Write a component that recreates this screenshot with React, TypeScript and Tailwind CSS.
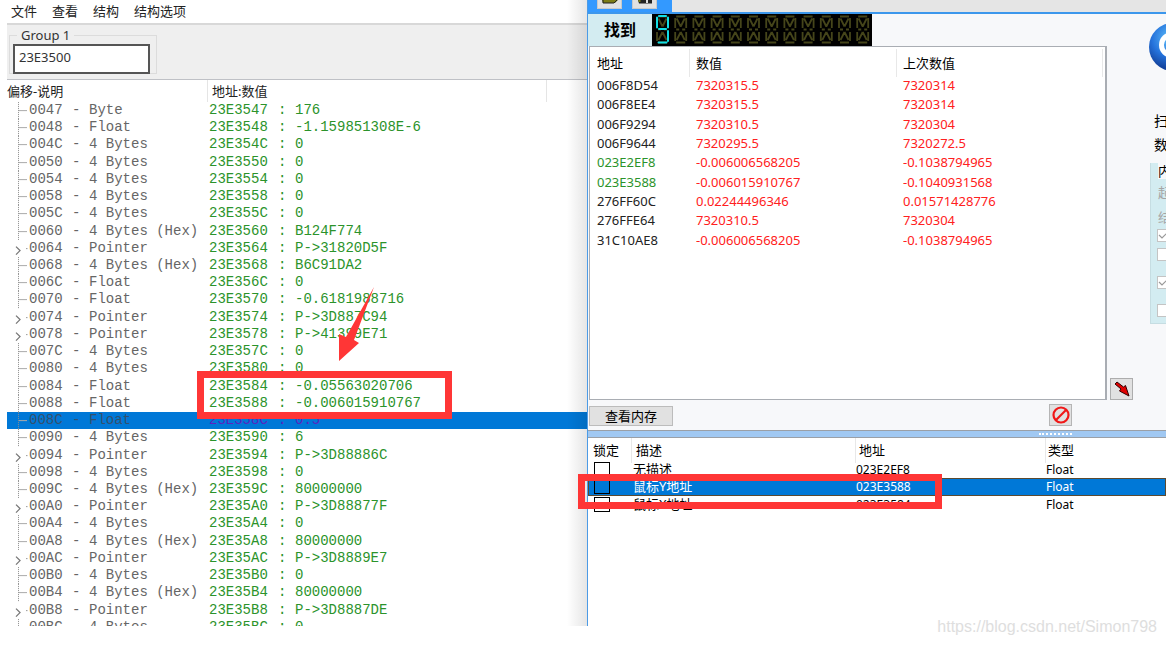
import clsx from "clsx"

interface TreeRow {
  offset: string
  type: string
  value: string
  selected?: boolean
}

interface FoundRow {
  address: string
  value: string
  previous: string
  isStatic?: boolean
}

interface CheatRow {
  description: string
  address: string
  type: string
  selected?: boolean
}

const menuItems = ["文件", "查看", "结构", "结构选项"]

const treeRows: TreeRow[] = [
  { offset: "47", type: "Byte", value: "176" },
  { offset: "48", type: "Float", value: "-1.159851308E-6" },
  { offset: "4C", type: "4 Bytes", value: "0" },
  { offset: "50", type: "4 Bytes", value: "0" },
  { offset: "54", type: "4 Bytes", value: "0" },
  { offset: "58", type: "4 Bytes", value: "0" },
  { offset: "5C", type: "4 Bytes", value: "0" },
  { offset: "60", type: "4 Bytes (Hex)", value: "B124F774" },
  { offset: "64", type: "Pointer", value: "P->31820D5F" },
  { offset: "68", type: "4 Bytes (Hex)", value: "B6C91DA2" },
  { offset: "6C", type: "Float", value: "0" },
  { offset: "70", type: "Float", value: "-0.6181988716" },
  { offset: "74", type: "Pointer", value: "P->3D887C94" },
  { offset: "78", type: "Pointer", value: "P->41399E71" },
  { offset: "7C", type: "4 Bytes", value: "0" },
  { offset: "80", type: "4 Bytes", value: "0" },
  { offset: "84", type: "Float", value: "-0.05563020706" },
  { offset: "88", type: "Float", value: "-0.006015910767" },
  { offset: "8C", type: "Float", value: "0.5", selected: true },
  { offset: "90", type: "4 Bytes", value: "6" },
  { offset: "94", type: "Pointer", value: "P->3D88886C" },
  { offset: "98", type: "4 Bytes", value: "0" },
  { offset: "9C", type: "4 Bytes (Hex)", value: "80000000" },
  { offset: "A0", type: "Pointer", value: "P->3D88877F" },
  { offset: "A4", type: "4 Bytes", value: "0" },
  { offset: "A8", type: "4 Bytes (Hex)", value: "80000000" },
  { offset: "AC", type: "Pointer", value: "P->3D8889E7" },
  { offset: "B0", type: "4 Bytes", value: "0" },
  { offset: "B4", type: "4 Bytes (Hex)", value: "80000000" },
  { offset: "B8", type: "Pointer", value: "P->3D8887DE" },
  { offset: "BC", type: "4 Bytes", value: "0" },
]

const foundRows: FoundRow[] = [
  { address: "006F8D54", value: "7320315.5", previous: "7320314" },
  { address: "006F8EE4", value: "7320315.5", previous: "7320314" },
  { address: "006F9294", value: "7320310.5", previous: "7320304" },
  { address: "006F9644", value: "7320295.5", previous: "7320272.5" },
  { address: "023E2EF8", value: "-0.006006568205", previous: "-0.1038794965", isStatic: true },
  { address: "023E3588", value: "-0.006015910767", previous: "-0.1040931568", isStatic: true },
  { address: "276FF60C", value: "0.02244496346", previous: "0.01571428776" },
  { address: "276FFE64", value: "7320310.5", previous: "7320304" },
  { address: "31C10AE8", value: "-0.006006568205", previous: "-0.1038794965" },
]

const cheatRows: CheatRow[] = [
  { description: "无描述", address: "023E2EF8", type: "Float" },
  { description: "鼠标Y地址", address: "023E3588", type: "Float", selected: true },
  { description: "鼠标X地址", address: "023E3584", type: "Float" },
]

function TreeMark({ pointer }: { pointer: boolean }) {
  return (
    <svg className="h-full w-[22px]" viewBox="0 0 22 17" fill="none" aria-hidden="true">
      {pointer ? (
        <>
          <path d="M9 6.5l4 4-4 4" stroke="#777" strokeWidth="1.3" />
          <path d="M19 8.5h1.5" stroke="#999" />
        </>
      ) : (
        <>
          <path d="M11.5 0v17" stroke="#8c8c8c" strokeDasharray="1 1" />
          <path d="M12 8.5h8" stroke="#aaa" />
        </>
      )}
    </svg>
  )
}

function StructureTable() {
  return (
    <table className="block min-h-0 flex-1 overflow-hidden">
      <thead className="block text-[13px] leading-[22px] text-[#222]">
        <tr className="grid h-[22px] grid-cols-[201px_339px_1fr] text-left">
          <th className="border-r border-[#e5e5e5] font-normal">偏移-说明</th>
          <th className="border-r border-[#e5e5e5] pl-1 font-normal">地址:数值</th>
          <th aria-hidden="true" />
        </tr>
      </thead>
      <tbody className="grid h-[534px] auto-rows-fr font-['Liberation_Mono',monospace] text-[14px] leading-4">
        {treeRows.map(({ offset, type, value, selected }) => (
          <tr
            key={offset}
            className={clsx(
              "grid grid-cols-[202px_1fr] whitespace-pre",
              selected ? "bg-[#0078d7] text-[#34506e]" : "text-[#666]",
            )}
          >
            <td className="grid grid-cols-[22px_43px_17px_1fr]">
              <TreeMark pointer={type === "Pointer"} />
              <span>00{offset}</span>
              <span>-</span>
              <span>{type}</span>
            </td>
            <td className={clsx("grid grid-cols-[69px_17px_1fr]", selected ? "text-[#5b24c0]" : "text-[#2b932b]")}>
              <span>23E35{offset}</span>
              <span>:</span>
              <span>{value}</span>
            </td>
          </tr>
        ))}
      </tbody>
    </table>
  )
}

function StructureWindow() {
  return (
    <section className="relative flex min-w-0 flex-col overflow-hidden bg-white">
      <nav className="flex h-[25px] items-center gap-[15px] border-b-2 border-[#d8d8d8] pl-1 text-[13px] text-[#222]">
        {menuItems.map((item) => (
          <button key={item} type="button">{item}</button>
        ))}
      </nav>
      <div className="h-[55px] border-b border-[#bfc1c6] bg-[#efefef] pl-0.5 pt-px">
        <fieldset className="h-[48px] w-[148px] border border-[#dcdcdc] px-[3px] text-[13px] text-[#333]">
          <legend className="ml-1 px-1 leading-[18px]">
            <label htmlFor="group1">Group 1</label>
          </legend>
          <input
            id="group1"
            defaultValue="23E3500"
            className="block h-[30px] w-[137px] border-2 border-[#555] bg-white px-1 pb-1 leading-4 outline-none"
          />
        </fieldset>
      </div>
      <StructureTable />
      <div className="pointer-events-none absolute inset-y-0 right-0 w-5 bg-linear-to-r from-black/0 to-black/10" />
    </section>
  )
}

function LedCounter() {
  const cells = Array.from({ length: 12 }, (_, i) => 4 + i * 18.2)
  return (
    <svg className="h-8 w-[220px] bg-black" viewBox="0 0 220 32" fill="none" role="img" aria-label="9">
      {cells.map((x, i) => (
        <g key={x} transform={`translate(${x} 0)`}>
          <path
            d="M2 2.5h9M2 28.5h9M1 4v10M12 4v10M1 18v9M12 18v9M2 15.5h3M8 15.5h3M2.5 4.5l4 8M10.5 4.5l-4 8M6.5 18l-4 8M6.5 18l4 8"
            stroke="#45451a"
            strokeWidth="1.8"
          />
          {i === 0 && (
            <path
              d="M3 2h7M1 3.500v10M12 3.500v10M3 15h7M12 17v10M2.500 28.500h8"
              stroke="#10dfe6"
              strokeWidth="2"
              strokeLinecap="round"
            />
          )}
        </g>
      ))}
    </svg>
  )
}

function TopToolbar() {
  return (
    <div className="flex h-[14px] border-b-2 border-[#3c97ec] bg-[#e5e5e5]">
      <div className="flex w-[84px] gap-2.5 bg-[#3399ff] pl-[9px]">
        <button type="button" aria-label="打开" className="h-[9px] w-[25px] border border-t-0 border-[#c9c9c9] bg-[#e1e1e1]">
          <svg className="mx-auto mb-1 h-1 w-4" viewBox="0 0 16 4">
            <path d="M0 0h16l-3 3H1z" fill="#7d7d14" />
            <path d="M1 0v3h11l3-3" fill="none" stroke="#222" />
          </svg>
        </button>
        <button type="button" aria-label="保存" className="h-[9px] w-[25px] border border-t-0 border-[#c9c9c9] bg-[#e1e1e1]">
          <svg className="mx-auto mb-1 h-1 w-4" viewBox="0 0 16 4">
            <path d="M1 0h14v3.500H2z" fill="#222" />
            <path d="M1.500 0h2v2h-2z" fill="#7d7d14" />
            <path d="M9 0h2v3H9z" fill="#ddd" />
          </svg>
        </button>
      </div>
    </div>
  )
}

function FoundList() {
  return (
    <table className="block h-[354px] min-w-0 flex-1 overflow-hidden border border-r-2 border-[#a9adb3] bg-white text-[13px]">
      <thead className="block text-black">
        <tr className="grid h-7 grid-cols-[100px_207px_206px_1fr] pt-0.5 text-left leading-7">
          <th className="border-r border-[#e8e8e8] pl-[7px] font-normal">地址</th>
          <th className="border-r border-[#e8e8e8] pl-[6px] font-normal">数值</th>
          <th className="border-r border-[#e8e8e8] pl-[6px] font-normal">上次数值</th>
        </tr>
      </thead>
      <tbody className="grid h-[174px] auto-rows-fr text-[#ff2020]">
        {foundRows.map(({ address, value, previous, isStatic }) => (
          <tr key={address} className="grid grid-cols-[100px_207px_1fr] leading-5">
            <td className={clsx("pl-[7px]", isStatic ? "text-[#2b932b]" : "text-[#222]")}>{address}</td>
            <td className="pl-[6px]">{value}</td>
            <td className="pl-[6px]">{previous}</td>
          </tr>
        ))}
      </tbody>
    </table>
  )
}

function Logo() {
  return (
    <svg className="-mt-6 h-[50px] w-[18px] self-end" viewBox="0 0 18 50" aria-hidden="true">
      <defs>
        <radialGradient id="ball" cx="22" cy="16" r="30" gradientUnits="userSpaceOnUse">
          <stop offset="0" stopColor="#5fc0fa" />
          <stop offset="0.600" stopColor="#2573dc" />
          <stop offset="1" stopColor="#15459f" />
        </radialGradient>
      </defs>
      <circle cx="25" cy="25" r="24" fill="url(#ball)" />
      <circle cx="24" cy="23" r="10.500" fill="none" stroke="#fff" strokeWidth="5" />
    </svg>
  )
}

function ScanOptions() {
  const ticks = [
    { label: "可写", checked: true, gap: "mt-0" },
    { label: "可执行", checked: false, gap: "mt-[6px]" },
    { label: "写时拷贝", checked: true, gap: "mt-[15px]" },
    { label: "快速扫描", checked: false, gap: "mt-[15px]" },
  ]
  return (
    <div className="flex w-[59px] shrink-0 flex-col whitespace-nowrap">
      <Logo />
      <div className="mt-[37px] w-[12px] self-end text-[14px] leading-6 text-black">
        <p>扫</p>
        <p>数</p>
      </div>
      <div className="mt-[6px] h-[161px] w-4 self-end border-b border-l border-[#c6dde2] bg-[#d3ecf1]">
        <p className="ml-[7px] bg-[#f7f8fa] text-[13px] leading-4">内</p>
        <p className="ml-[7px] text-[13px] leading-[26px] text-[#a5a5a5]">起</p>
        <p className="ml-[7px] text-[13px] leading-[24px] text-[#a5a5a5]">结</p>
        {ticks.map(({ label, checked, gap }) => (
          <label key={label} className={clsx("relative ml-[6px] block size-[13px]", gap)}>
            <input
              type="checkbox"
              aria-label={label}
              defaultChecked={checked}
              disabled
              className="block size-[13px] appearance-none border border-[#c4c4c4] bg-white"
            />
            {checked && (
              <svg className="absolute inset-0 size-[13px]" viewBox="0 0 13 13" fill="none">
                <path d="M2 6l3 3 6-6" stroke="#999" strokeWidth="1.200" />
              </svg>
            )}
          </label>
        ))}
      </div>
      <button
        type="button"
        aria-label="添加到列表"
        className="ml-[3px] mt-[54px] flex h-[22px] w-[23px] items-center justify-center border border-[#adadad] bg-[#e1e1e1]"
      >
        <svg className="size-4" viewBox="0 0 16 16">
          <path d="M1 3l2-2 6.500 5 2-1.500 3.500 10.500-9.500-5 1.500-2z" fill="#e00000" stroke="#300" />
        </svg>
      </button>
    </div>
  )
}

function CheatTable() {
  return (
    <table className="block min-h-0 flex-1 overflow-hidden bg-white text-black">
      <thead className="block text-[13px] leading-[25px]">
        <tr className="grid h-[23px] grid-cols-[44px_224px_190px_1fr] text-left">
          <th className="border-r border-[#e8e8e8] pl-[5px] font-normal">锁定</th>
          <th className="border-r border-[#e8e8e8] pl-1 font-normal">描述</th>
          <th className="border-r border-[#e8e8e8] pl-[3px] font-normal">地址</th>
          <th className="pl-0.5 font-normal">类型</th>
        </tr>
      </thead>
      <tbody className="grid h-[52px] auto-rows-fr text-[12px] leading-[17px]">
        {cheatRows.map(({ description, address, type, selected }) => (
          <tr
            key={address}
            className={clsx(
              "grid grid-cols-[45px_223px_190px_1fr]",
              selected && "bg-[#0078d7] text-white outline outline-[#5c4a30] -outline-offset-1",
            )}
          >
            <td className="pl-[6px] pt-px">
              <input
                type="checkbox"
                aria-label={`锁定 ${description}`}
                className="block h-[15px] w-4 appearance-none border border-black"
              />
            </td>
            <td className="text-[13px]">{description}</td>
            <td>{address}</td>
            <td>{type}</td>
          </tr>
        ))}
      </tbody>
    </table>
  )
}

function ScannerWindow() {
  return (
    <section className="flex min-w-0 flex-col overflow-hidden border-l border-[#4c9be6] bg-[#f7f8fa]">
      <TopToolbar />
      <div className="flex h-8">
        <div className="w-16 bg-[#d3ecf1] text-center text-[16px] font-bold leading-8 text-black">找到</div>
        <LedCounter />
      </div>
      <div className="flex pl-px">
        <FoundList />
        <ScanOptions />
      </div>
      <div className="flex h-[30px] items-start justify-between pl-px pr-[94px] pt-1">
        <button
          type="button"
          className="mt-0.5 h-5 w-[84px] border border-[#bcbcbc] bg-[#e1e1e1] text-[13px] leading-[18px] text-black"
        >
          查看内存
        </button>
        <button
          type="button"
          aria-label="清空"
          className="flex h-[22px] w-[23px] items-center justify-center border border-[#b5b5b5] bg-[#e1e1e1]"
        >
          <svg className="size-[18px]" viewBox="0 0 18 18" fill="none" stroke="#f01818" strokeWidth="2.200">
            <circle cx="9" cy="9" r="7.500" />
            <path d="M4 14L14 4" />
          </svg>
        </button>
      </div>
      <div className="flex h-2 items-center justify-end border-y border-[#9a9fa6] bg-[#a0c8f2] pr-[94px]">
        <div className="w-[33px] border-t-2 border-dotted border-white" />
      </div>
      <CheatTable />
    </section>
  )
}

export default function App() {
  return (
    <main className="relative h-screen overflow-hidden bg-white pb-[19px] pl-[7px] font-['Noto_Sans','Noto_Sans_CJK_SC',sans-serif]">
      <div className="grid h-full grid-cols-[580fr_579fr] grid-rows-[minmax(0,1fr)]">
        <StructureWindow />
        <ScannerWindow />
      </div>

      {/* red pen marks on top of both windows */}
      <div className="pointer-events-none absolute left-[197px] top-[371px] h-12 w-[255px] border-[7px] border-[#ff3636]" />
      <svg className="pointer-events-none absolute left-[338px] top-[286px] h-[76px] w-[38px]" viewBox="338 286 38 76">
        <path d="M374 287L354 340l5 3-20 18v-27l7 3z" fill="#ff3636" />
      </svg>
      <div className="pointer-events-none absolute left-[578px] top-[474px] h-[35px] w-[364px] border-[7px] border-[#ff3636]" />

      <p className="absolute bottom-2 right-[9px] font-['Liberation_Sans',sans-serif] text-[16px] leading-5 text-[#dedede]">
        https://blog.csdn.net/Simon798
      </p>
    </main>
  )
}
